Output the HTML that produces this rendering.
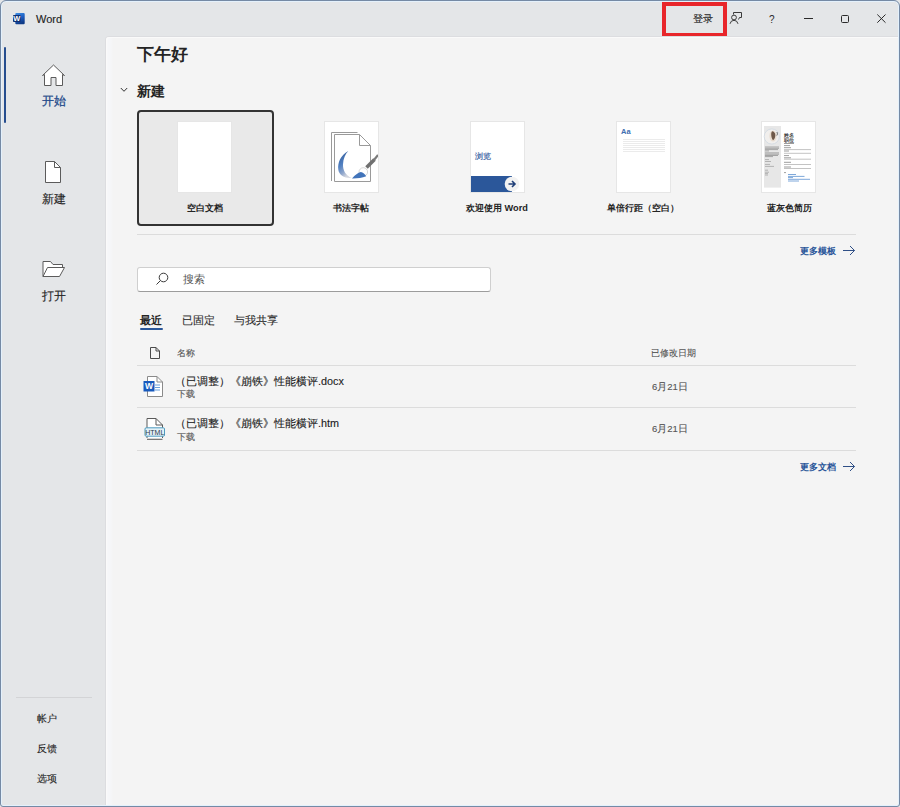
<!DOCTYPE html>
<html><head><meta charset="utf-8">
<style>
*{margin:0;padding:0;box-sizing:border-box}
html,body{width:900px;height:807px;overflow:hidden;background:#fff}
body{font-family:"Liberation Sans",sans-serif;color:#242424;position:relative}
.a{position:absolute;white-space:nowrap;line-height:1}
svg.a{overflow:visible}
#win{position:absolute;left:0;top:0;width:900px;height:807px;background:#e4e6e8;overflow:hidden}
#frame{position:absolute;left:0;top:0;width:900px;height:807px;border:1px solid #758aa5;border-radius:6px 6px 3px 3px}
#inner{position:absolute;left:1px;top:1px;width:898px;height:805px;border:1px solid #e4f1fc;border-radius:5px 5px 2px 2px}
#main{position:absolute;left:105px;top:36px;width:793px;height:769px;background:#f4f4f4;border-top-left-radius:4px;border-left:1px solid #dcdde0;border-top:1px solid #dcdde0}
#main:before{content:"";position:absolute;left:0;top:0;right:0;bottom:0;background:linear-gradient(to right,#f7f8fa,#f5f6f8 4px,#f4f4f4 6px);border-left:1px solid #fafafa;border-top:1px solid #fafafa;border-top-left-radius:3px}
.blue{color:#2b579a}
.thumb{position:absolute;top:122px;width:53px;height:70px;background:#fff;box-shadow:0 0 0 1px #e6e6e6}
.lbl{position:absolute;top:202px;width:146px;text-align:center;font-size:9.2px;font-weight:bold;color:#242424}
.hl{position:absolute;left:137px;width:719px;height:1px;background:#dcdcdc}
.gray{color:#555}
.sk{-webkit-text-stroke:0.12px currentColor}
</style></head><body>
<div id="win">
 <!-- title bar -->
 <svg class="a" style="left:0;top:0" width="30" height="30" viewBox="0 0 30 30">
  <defs><linearGradient id="wg" x1="0" y1="0" x2="0.3" y2="1"><stop offset="0" stop-color="#3d8ee4"/><stop offset="0.55" stop-color="#1c5bbf"/><stop offset="1" stop-color="#0f3a86"/></linearGradient></defs>
  <rect x="15.3" y="13" width="9.4" height="11.3" rx="1" fill="url(#wg)"/>
  <rect x="13" y="15" width="7.6" height="7" rx="0.8" fill="#102f72"/>
  <text x="16.8" y="21.4" font-size="7.4" font-weight="bold" fill="#fff" text-anchor="middle" font-family="Liberation Sans">W</text>
 </svg>
 <div class="a" style="left:36px;top:14px;font-size:11px;color:#1f1f1f;-webkit-text-stroke:0.15px #1f1f1f">Word</div>
 <div class="a" style="left:662px;top:2px;width:65px;height:35px;border:4px solid #e8262b"></div>
 <div class="a sk" style="left:693px;top:14px;font-size:10px;color:#1f1f1f">登录</div>
 <!-- feedback icon -->
 <svg class="a" style="left:728px;top:10px" width="16" height="16" viewBox="0 0 16 16" fill="none" stroke="#3a3a3a" stroke-width="1">
  <path d="M5.5 4.5 V2.5 H13.5 V7.5 H11.5 L10.5 9.5"/>
  <circle cx="6" cy="7.5" r="2.4"/>
  <path d="M2 13.8 Q2.8 10.3 6 10.3 Q9.2 10.3 10 13.8"/>
 </svg>
 <div class="a" style="left:769px;top:15px;font-size:10px;color:#2a2a2a">?</div>
 <div class="a" style="left:804px;top:18px;width:9px;height:1px;background:#2a2a2a"></div>
 <div class="a" style="left:841px;top:15px;width:8px;height:8px;border:1.2px solid #2a2a2a;border-radius:1.5px"></div>
 <svg class="a" style="left:876px;top:13px" width="11" height="11" viewBox="0 0 11 11" stroke="#2a2a2a" stroke-width="1"><path d="M1.3 1.5 L9.5 9.7 M9.5 1.5 L1.3 9.7"/></svg>

 <!-- sidebar -->
 <div class="a" style="left:4px;top:47px;width:2px;height:76px;background:#254d8f;border-radius:1px"></div>
 <svg class="a" style="left:40px;top:62px" width="26" height="26" viewBox="0 0 26 26" fill="#fff" stroke="#5b5b5b" stroke-width="1">
  <path d="M4.5 23.5 V12.5 L2.5 13.5 L13.5 3 L24.5 13.5 L22.5 12.5 V23.5 H16 V15.5 H11 V23.5 Z" stroke-linejoin="round"/>
 </svg>
 <div class="a" style="left:42px;top:96px;font-size:11.5px;color:#244a8a;-webkit-text-stroke:0.3px #244a8a">开始</div>
 <svg class="a" style="left:40px;top:158px" width="26" height="26" viewBox="0 0 26 26" fill="#fff" stroke="#5b5b5b" stroke-width="1">
  <path d="M5.5 3.5 H14.5 L20.5 9.5 V24.5 H5.5 Z"/>
  <path d="M14.5 3.5 V9.5 H20.5" fill="none"/>
 </svg>
 <div class="a sk" style="left:42px;top:194px;font-size:11.5px">新建</div>
 <svg class="a" style="left:40px;top:256px" width="28" height="24" viewBox="0 0 28 24" fill="#fff" stroke="#5b5b5b" stroke-width="1">
  <path d="M3 20.5 V5.5 H10.5 L13 8.5 H22.5 V11.5"/>
  <path d="M3 20.5 L7.5 11.5 H24.5 L19.5 20.5 Z"/>
 </svg>
 <div class="a sk" style="left:42px;top:291px;font-size:11.5px">打开</div>
 <div class="a" style="left:16px;top:697px;width:76px;height:1px;background:#d3d4d6"></div>
 <div class="a sk" style="left:37px;top:714px;font-size:9.6px">帐户</div>
 <div class="a sk" style="left:37px;top:744px;font-size:9.6px">反馈</div>
 <div class="a sk" style="left:37px;top:774px;font-size:9.6px">选项</div>

 <!-- main -->
 <div id="main"></div>
 <div class="a" style="left:137px;top:47px;font-size:16.6px;font-weight:bold">下午好</div>
 <svg class="a" style="left:119px;top:86px" width="10" height="8" viewBox="0 0 10 8" fill="none" stroke="#333" stroke-width="1"><path d="M1.8 2 L5 5.3 L8.2 2"/></svg>
 <div class="a" style="left:137px;top:85px;font-size:13.8px;font-weight:bold">新建</div>

 <!-- template cards -->
 <div class="a" style="left:137px;top:110px;width:137px;height:116px;border:2px solid #333;border-radius:4px;background:#e9e9e9"></div>
 <div class="thumb" style="left:178px"></div>
 <div class="lbl" style="left:132px">空白文档</div>

 <div class="thumb" style="left:325px">
  <svg width="53" height="70" viewBox="0 0 53 70">
   <defs><linearGradient id="cg" x1="0" y1="0" x2="0.45" y2="1"><stop offset="0" stop-color="#2f548f"/><stop offset="0.5" stop-color="#4f7fc1"/><stop offset="0.8" stop-color="#8fa6cc"/><stop offset="1" stop-color="#d2d5de"/></linearGradient></defs>
   <path d="M6.5 59 V10.5 H32.5" fill="none" stroke="#9a9a9a" stroke-width="1"/>
   <path d="M9.5 59.5 V12.5 H34.5 L45.5 23.5 V59.5 Z" fill="#fff" stroke="#9a9a9a" stroke-width="1"/>
   <path d="M34.5 12.5 V23.5 H45.5" fill="none" stroke="#9a9a9a" stroke-width="1"/>
   <path d="M23.3 29 C15.5 33 12.5 41 13.3 47.5 C14 53 19 56.3 26.7 56 C20.5 53.5 17.8 48 18 42.5 C18.3 36.5 20.3 32 23.3 29 Z" fill="url(#cg)"/>
   <circle cx="38.3" cy="50" r="4.3" fill="#fff" stroke="#bdbdbd" stroke-width="0.6"/>
   <path d="M27 56.5 C30 53 33 50.5 35.8 50 C38 50.3 40 52 41.2 54.3 C37 56 32 56.6 27 56.5 Z" fill="#4274ba"/>
   <path d="M41.5 45.5 L49.5 37.5" stroke="#707070" stroke-width="3.6"/>
   <path d="M49 38 L53 33" stroke="#7a7a7a" stroke-width="2.2"/>
  </svg>
 </div>
 <div class="lbl" style="left:278px">书法字帖</div>

 <div class="thumb" style="left:471px">
  <div class="a" style="left:4px;top:31px;font-size:7.8px;color:#3a5fa3;-webkit-text-stroke:0.2px #3a5fa3">浏览</div>
  <div class="a" style="left:0;top:54px;width:41px;height:16px;background:#2b579a"></div>
  <svg class="a" style="left:33px;top:54px" width="16" height="16" viewBox="0 0 16 16"><circle cx="8" cy="8" r="7.3" fill="#f2f2f2"/><path d="M4.5 8 H11 M8 5 L11 8 L8 11" fill="none" stroke="#203f78" stroke-width="1.6"/></svg>
 </div>
 <div class="lbl" style="left:424px">欢迎使用 Word</div>

 <div class="thumb" style="left:617px">
  <div class="a" style="left:4px;top:6px;font-size:7.5px;font-weight:bold;color:#3f6fb0">Aa</div>
  <div class="a" style="left:6px;top:17px;width:42px;height:1px;background:#ebebeb"></div><div class="a" style="left:6px;top:19px;width:42px;height:1px;background:#ebebeb"></div><div class="a" style="left:6px;top:21px;width:42px;height:1px;background:#ebebeb"></div><div class="a" style="left:6px;top:23px;width:42px;height:1px;background:#ebebeb"></div><div class="a" style="left:6px;top:25px;width:42px;height:1px;background:#ebebeb"></div><div class="a" style="left:6px;top:27px;width:42px;height:1px;background:#ebebeb"></div><div class="a" style="left:6px;top:29px;width:42px;height:1px;background:#ebebeb"></div>
 </div>
 <div class="lbl" style="left:570px">单倍行距（空白）</div>

 <div class="thumb" style="left:762px">
  <svg width="53" height="70" viewBox="0 0 53 70">
   <rect x="2" y="4" width="17" height="61.6" fill="#e7e7e7"/>
   <circle cx="9.8" cy="14.5" r="7.6" fill="#f1efed" stroke="#d3dae2" stroke-width="0.9"/>
   <ellipse cx="11" cy="14" rx="3.6" ry="5.6" fill="#e9dccf"/>
   <path d="M10.2 9.2 C12.5 9.5 13.8 12 13.2 14.5 C12.8 16.5 11.8 18 11 18.3 C9.8 17 9.2 14.5 9.2 12.3 C9.2 10.8 9.5 9.6 10.2 9.2 Z" fill="#6e5848"/>
   <path d="M14.8 10 C15.6 11 15.6 12.5 14.8 13.5" stroke="#555" stroke-width="0.9" fill="none"/>
   <g stroke="#9c9c9c" stroke-width="0.9">
    <path d="M3 25 H17 M3 26.3 H17 M3 27.6 H16 M3 28.9 H7"/>
    <path d="M3 30.9 H17 M3 32.2 H17 M3 33.5 H16 M3 34.6 H11"/>
   </g>
   <g stroke="#a4a4a4" stroke-width="0.8">
    <path d="M3 37.6 H7 M3 39.5 H9 M3 42.4 H8 M3 44.4 H12 M3 48.2 H6 M3 50.2 H7 M3 51.6 H6 M3 53 H6"/>
   </g>
   <text x="22" y="15" font-size="4.6" font-weight="bold" fill="#333" font-family="Liberation Sans">姓名</text>
   <text x="22" y="20" font-size="4.6" font-weight="bold" fill="#333" font-family="Liberation Sans">职位</text>
   <g stroke="#858585" stroke-width="0.8">
    <path d="M22 21.5 H32 M22 23.6 H28 M22 25.7 H29 M22 29 H27 M22 33.6 H27 M22 35.8 H29 M22 40.3 H29 M22 45 H29 M22 50.6 H24"/>
   </g>
   <g stroke="#b4b4b4" stroke-width="0.8">
    <path d="M22 27.6 H49 M22 31.3 H49 M22 37.2 H49 M22 42.5 H49 M22 46.5 H49"/>
   </g>
   <g stroke="#6f9ed6" stroke-width="0.9">
    <path d="M26 52.5 H34 M26 54.4 H42.5 M26 55.6 H31 M26 57.3 H48 M26 59 H37"/>
   </g>
  </svg>
 </div>
 <div class="lbl" style="left:716px">蓝灰色简历</div>

 <div class="hl" style="top:234px"></div>
 <div class="a blue" style="left:800px;top:247px;font-size:9.3px;font-weight:bold">更多模板</div>
 <svg class="a" style="left:842px;top:245px" width="14" height="11" viewBox="0 0 14 11" fill="none" stroke="#2f4f86" stroke-width="1"><path d="M1 5.5 H12.5 M8 1 L12.5 5.5 L8 10"/></svg>

 <!-- search -->
 <div class="a" style="left:137px;top:267px;width:354px;height:25px;background:#fff;border:1px solid #cfcfcf;border-bottom-color:#9c9c9c;border-radius:3px"></div>
 <svg class="a" style="left:155px;top:271px" width="14" height="16" viewBox="0 0 14 16" fill="none" stroke="#3a3a3a" stroke-width="1"><circle cx="8.5" cy="6.5" r="4.3"/><path d="M5.5 9.5 L1.5 13.5"/></svg>
 <div class="a gray" style="left:183px;top:274px;font-size:11px">搜索</div>

 <!-- tabs -->
 <div class="a" style="left:140px;top:315px;font-size:11px;font-weight:bold">最近</div>
 <div class="a" style="left:140px;top:328px;width:23px;height:2px;background:#2b579a;border-radius:1px"></div>
 <div class="a sk" style="left:182px;top:315px;font-size:11px;color:#2a2a2a">已固定</div>
 <div class="a sk" style="left:234px;top:315px;font-size:11px;color:#2a2a2a">与我共享</div>

 <!-- list header -->
 <svg class="a" style="left:149px;top:346px" width="12" height="14" viewBox="0 0 12 14" fill="none" stroke="#4a4a4a" stroke-width="1"><path d="M1.5 1.5 H7 L10.5 5 V12.5 H1.5 Z M7 1.5 V5 H10.5"/></svg>
 <div class="a gray sk" style="left:177px;top:349px;font-size:9px">名称</div>
 <div class="a gray sk" style="left:651px;top:349px;font-size:9px">已修改日期</div>
 <div class="hl" style="top:365px"></div>

 <!-- row1 -->
 <svg class="a" style="left:143px;top:375px" width="22" height="23" viewBox="0 0 22 23">
  <path d="M4.5 1.5 H14 L19.5 7 V21.5 H4.5 Z" fill="#fff" stroke="#8a8a8a" stroke-width="1"/>
  <path d="M14 1.5 V7 H19.5" fill="none" stroke="#8a8a8a" stroke-width="1"/>
  <path d="M12 10 H17 M12 12.5 H17 M12 15 H17" stroke="#6aa0dc" stroke-width="1.2"/>
  <rect x="0.5" y="6" width="11" height="10.5" fill="#185abd"/>
  <text x="6" y="14.2" font-size="8.5" font-weight="bold" fill="#fff" text-anchor="middle" font-family="Liberation Sans">W</text>
 </svg>
 <div class="a sk" style="left:175px;top:376px;font-size:10.8px;color:#1c1c1c">（已调整）《崩铁》性能横评.docx</div>
 <div class="a gray sk" style="left:177px;top:390px;font-size:9px">下载</div>
 <div class="a gray sk" style="left:652px;top:382px;font-size:9.5px">6月21日</div>
 <div class="hl" style="top:407px"></div>

 <!-- row2 -->
 <svg class="a" style="left:143px;top:416px" width="24" height="25" viewBox="0 0 24 25">
  <path d="M4 22 V2.5 H13 L19.5 9 V22" fill="#fff" stroke="#5a5a5a" stroke-width="1"/>
  <path d="M13 2.5 V9 H19.5" fill="none" stroke="#5a5a5a" stroke-width="1"/>
  <rect x="2" y="11.8" width="19.5" height="8.4" rx="1.2" fill="#e3f1f7" stroke="#4d9bbf" stroke-width="1"/>
  <path d="M4 23.3 H19.5" stroke="#5a5a5a" stroke-width="1"/>
  <text x="11.8" y="18.8" font-size="7" fill="#2a3b4a" text-anchor="middle" font-family="Liberation Sans">HTML</text>
 </svg>
 <div class="a sk" style="left:175px;top:418px;font-size:10.8px;color:#1c1c1c">（已调整）《崩铁》性能横评.htm</div>
 <div class="a gray sk" style="left:177px;top:433px;font-size:9px">下载</div>
 <div class="a gray sk" style="left:652px;top:424px;font-size:9.5px">6月21日</div>
 <div class="hl" style="top:450px"></div>

 <div class="a blue" style="left:800px;top:463px;font-size:9.3px;font-weight:bold">更多文档</div>
 <svg class="a" style="left:842px;top:461px" width="14" height="11" viewBox="0 0 14 11" fill="none" stroke="#2f4f86" stroke-width="1"><path d="M1 5.5 H12.5 M8 1 L12.5 5.5 L8 10"/></svg>
 <div id="inner"></div>
 <div id="frame"></div>
</div>
</body></html>
